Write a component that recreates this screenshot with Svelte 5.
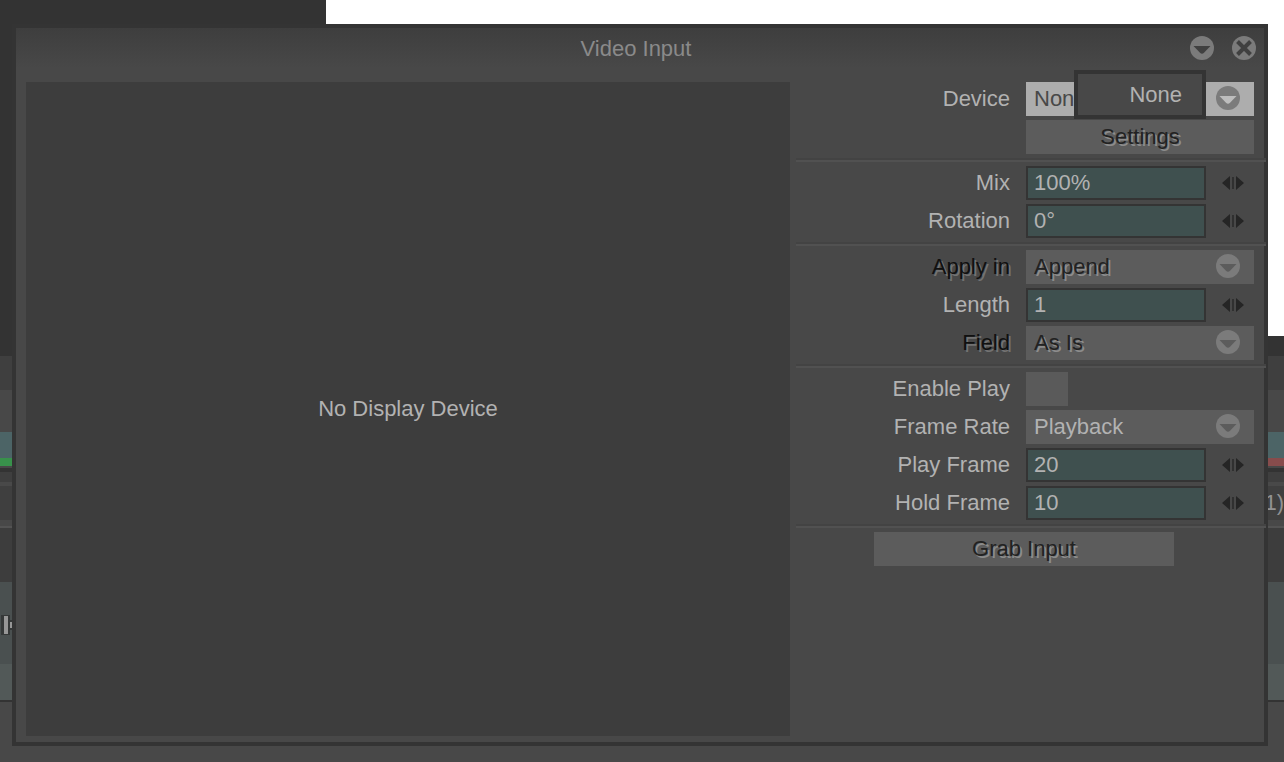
<script lang="ts">
  type Field = {
    id: string;
    label: string;
    kind: "select" | "number" | "check";
    value: string;
    options?: string[];
    off?: boolean;
  };

  const groups: Field[][] = [
    [
      { id: "mix", label: "Mix", kind: "number", value: "100%" },
      { id: "rotation", label: "Rotation", kind: "number", value: "0°" },
    ],
    [
      { id: "apply", label: "Apply in", kind: "select", value: "Append", options: ["Append"], off: true },
      { id: "length", label: "Length", kind: "number", value: "1" },
      { id: "field", label: "Field", kind: "select", value: "As Is", options: ["As Is"], off: true },
    ],
    [
      { id: "enable-play", label: "Enable Play", kind: "check", value: "" },
      { id: "frame-rate", label: "Frame Rate", kind: "select", value: "Playback", options: ["Playback"] },
      { id: "play-frame", label: "Play Frame", kind: "number", value: "20" },
      { id: "hold-frame", label: "Hold Frame", kind: "number", value: "10" },
    ],
  ];

  // timeline strips behind the window, top to bottom
  const strips = ["gap", "tabs", "ruler", "clip", "marks", "edge", "rule", "bar", "line", "info", "foot", "light", "tools", "track", "track-low", "rule thin", "rest"];

  let menuOpen = $state(true);
  let device = $state("None");
</script>

{#snippet roundArrow()}
  <svg class="round-arrow" viewBox="0 0 24 24" aria-hidden="true">
    <circle cx="12" cy="12" r="12" />
    <path d="M3.500 10h17l-6.500 6.800q-2 1.800-4 0z" />
  </svg>
{/snippet}

<main class="desktop">
  <div class="backdrop">
    <div class="stage"><div class="canvas"></div></div>
    {#each strips as strip}
      <div class="strip {strip}">
        {#if strip === "info"}
          <span>1)</span>
        {:else if strip === "track"}
          <svg class="handle" viewBox="0 0 12 22" aria-hidden="true">
            <path d="M1 1h9v20H1z M9 6h3v10H9z" fill="#353838" />
            <path d="M4 2h4v18H4z M10 8h2v6h-2z" fill="#969696" />
          </svg>
        {/if}
      </div>
    {/each}
  </div>

  <section class="window" aria-labelledby="title">
    <header>
      <h1 id="title">Video Input</h1>
      <div class="window-buttons">
        <button aria-label="Window menu">{@render roundArrow()}</button>
        <button aria-label="Close">
          <svg viewBox="0 0 24 24" aria-hidden="true">
            <circle cx="12" cy="12" r="12" />
            <path class="cross" d="M5.500 5.500l13 13M18.500 5.500l-13 13" />
          </svg>
        </button>
      </div>
    </header>

    <div class="body">
      <div class="preview">No Display Device</div>

      <form class="panel" onsubmit={(event) => event.preventDefault()}>
        <div class="group">
          <div class="row">
            <label for="device">Device</label>
            <div class="select active">
              <select id="device" bind:value={device}>
                <option>None</option>
              </select>
              {@render roundArrow()}
              {#if menuOpen}
                <div class="menu">
                  <button type="button" onclick={() => (menuOpen = false)}>None</button>
                </div>
              {/if}
            </div>
          </div>
          <div class="row">
            <button type="button" class="push">Settings</button>
          </div>
        </div>

        {#each groups as group}
          <div class="group">
            {#each group as field}
              <div class="row">
                <label for={field.id} class:off={field.off}>{field.label}</label>
                {#if field.kind === "select"}
                  <div class="select" class:off={field.off}>
                    <select id={field.id} value={field.value} disabled={field.off}>
                      {#each field.options ?? [] as option}
                        <option>{option}</option>
                      {/each}
                    </select>
                    {@render roundArrow()}
                  </div>
                {:else if field.kind === "number"}
                  <div class="number">
                    <input id={field.id} type="text" value={field.value} />
                    <button type="button" aria-label="Adjust {field.label}">
                      <svg viewBox="0 0 22 14" aria-hidden="true">
                        <path d="M0 7L8 0v14zM22 7L14 0v14z" />
                        <path class="tick" d="M10 1h2v12h-2z" />
                      </svg>
                    </button>
                  </div>
                {:else}
                  <input id={field.id} type="checkbox" />
                {/if}
              </div>
            {/each}
          </div>
        {/each}

        <div class="group">
          <button type="button" class="push grab">Grab Input</button>
        </div>
      </form>
    </div>
  </section>
</main>

<style>
  :global(body) {
    background: #484848;
  }

  .desktop {
    display: grid;
    min-height: 100vh;
    overflow: hidden;
    color: #b2b2b2;
    font: 22px/34px "Liberation Sans", Arial, sans-serif;
  }

  .backdrop,
  .window {
    grid-area: 1 / 1;
    min-width: 0;
  }

  .backdrop {
    display: flex;
    flex-direction: column;
  }

  .stage {
    display: flex;
    height: 336px;
    padding-left: 326px;
    background: #333;
  }

  .canvas {
    flex: 1;
    background: #fff;
  }

  .gap { height: 20px; background: #333; }
  .tabs { height: 34px; background: #3f3f3f; }
  .ruler { height: 42px; background: #484848; }
  .clip { height: 26px; background: #4c6466; }
  .marks { height: 8px; background: linear-gradient(90deg, #38914b 50%, #874c4c 50%); }
  .edge { height: 2px; background: #484848; }
  .rule { height: 4px; background: #333; }
  .bar { height: 10px; background: #3f3f3f; }
  .line { height: 4px; background: #494949; }
  .info {
    height: 34px;
    background: #3f3f3f;
    color: #929292;
    text-align: right;
  }
  .foot { height: 6px; background: #484848; }
  .light { height: 2px; background: #535353; }
  .tools { height: 54px; background: #3d3d3d; }
  .track {
    display: flex;
    align-items: center;
    height: 82px;
    background: #4a5050;
  }
  .track-low { height: 36px; background: #525958; }
  .thin { height: 2px; }
  .rest { flex: 1; background: #484848; }

  .handle {
    width: 12px;
    height: 22px;
    padding-top: 4px;
  }

  .window {
    display: flex;
    flex-direction: column;
    margin: 24px 16px 16px 12px;
    border: 4px solid #343434;
    background: #484848;
  }

  header {
    display: grid;
    grid-template-columns: 1fr auto 1fr;
    align-items: center;
    height: 40px;
    margin-bottom: 14px;
    padding-right: 8px;
    background: linear-gradient(#3e3e3e, #484848);
  }

  h1 {
    grid-column: 2;
    margin: 0;
    padding-top: 2px;
    color: #8a8a8a;
    font-size: 22px;
    font-weight: 400;
  }

  button,
  select,
  input {
    box-sizing: border-box;
    margin: 0;
    padding: 0;
    border: 0;
    border-radius: 0;
    background: none;
    color: inherit;
    font: inherit;
    appearance: none;
  }

  .window-buttons {
    display: flex;
    gap: 18px;
    justify-content: flex-end;
  }

  .window-buttons button {
    display: flex;
    width: 24px;
    height: 24px;
  }

  .window-buttons svg {
    width: 24px;
    height: 24px;
    fill: #7b7b7b;
  }

  .window-buttons path {
    fill: #404040;
  }

  .window-buttons .cross {
    fill: none;
    stroke: #404040;
    stroke-width: 4;
  }

  .body {
    display: grid;
    flex: 1;
    grid-template-columns: minmax(0, 764fr) minmax(0, 468fr);
    gap: 6px;
    padding: 0 0 6px 10px;
  }

  .preview {
    display: grid;
    place-items: center;
    background: #3d3d3d;
  }

  .group {
    display: grid;
    gap: 4px;
    margin-right: -2px;
    padding-right: 12px;
  }

  .group + .group {
    margin-top: 6px;
    padding-top: 4px;
    border-top: 2px solid #515151;
    box-shadow: 0 -2px #434343;
  }

  .row {
    display: grid;
    grid-template-columns: 1fr 228px;
    column-gap: 16px;
    height: 34px;
  }

  .row > :last-child {
    grid-column: 2;
  }

  label {
    text-align: right;
  }

  label.off {
    color: #101010;
    text-shadow: 2px 2px #727272;
  }

  .select {
    position: relative;
    background: #5c5c5c;
  }

  .select select {
    width: 100%;
    height: 34px;
    padding: 0 48px 0 8px;
    opacity: 1;
  }

  .select.off select {
    color: #222;
    text-shadow: 2px 2px #8c8c8c;
  }

  .select .round-arrow {
    position: absolute;
    top: 4px;
    right: 14px;
    width: 24px;
    height: 24px;
    fill: #7b7b7b;
    pointer-events: none;
  }

  .select .round-arrow path {
    fill: #5c5c5c;
  }

  .select.active {
    background: #adadad;
    color: #484848;
  }

  .select.active .round-arrow path {
    fill: #bdbdbd;
  }

  .menu {
    position: absolute;
    top: -12px;
    right: 48px;
    z-index: 1;
    border: 4px solid #343434;
    background: #484848;
  }

  .menu button {
    display: block;
    width: 124px;
    height: 41px;
    padding-right: 20px;
    color: #b2b2b2;
    text-align: right;
  }

  .push {
    height: 34px;
    background: #5c5c5c;
    color: #222;
    text-align: center;
    text-shadow: 2px 2px #8c8c8c;
  }

  .grab {
    width: 300px;
    margin-left: 78px;
  }

  .number {
    display: flex;
    gap: 16px;
    align-items: center;
  }

  .number input {
    width: 180px;
    height: 34px;
    padding: 0 6px;
    border: 2px solid #343434;
    background: #3f504f;
    line-height: 30px;
  }

  .number button {
    display: flex;
  }

  .number svg {
    width: 22px;
    height: 14px;
    fill: #252525;
  }

  .number .tick {
    fill: #303030;
  }

  input[type="checkbox"] {
    width: 42px;
    height: 34px;
    background: #5a5a5a;
  }

  input[type="checkbox"]:checked {
    background: #adadad;
  }
</style>
